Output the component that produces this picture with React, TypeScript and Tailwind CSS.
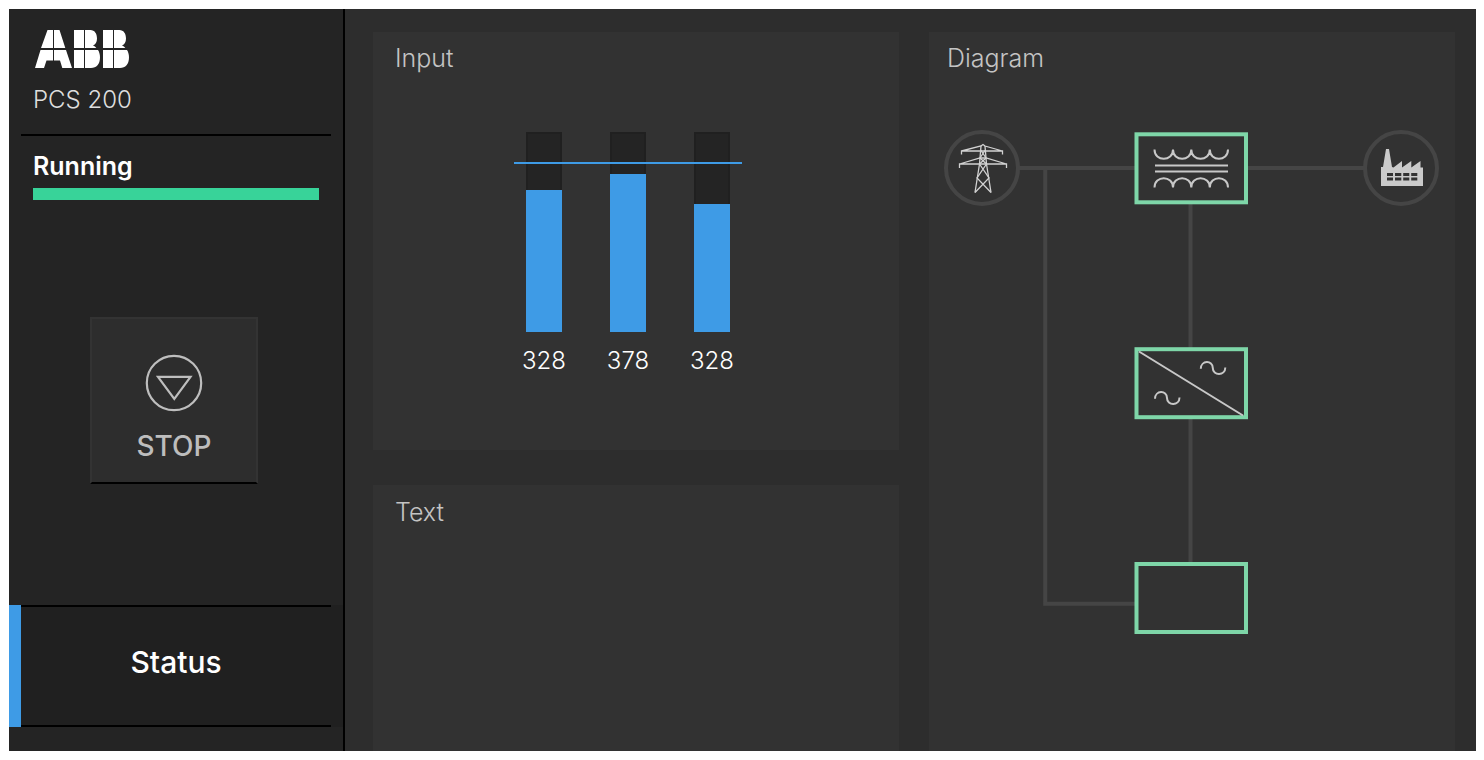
import React from "react";

type Phase = { id: string; value: number; level: number };

const phases: Phase[] = [
  { id: "L1", value: 328, level: 71 },
  { id: "L2", value: 378, level: 79 },
  { id: "L3", value: 328, level: 64 },
];

function Logo() {
  const rightHalf =
    "M50 0H55.5C59.5 0 62 3.5 62 8.5C62 12 60.5 14.5 58 15.6C59.5 16.2 60.5 17 61.3 18H50Z M50 20H63C64.3 22 65 24.5 65 27.5C65 34 61.5 38 56 38H50Z";
  const leftHalf = "M39 0H49V18H39Z M39 20H49V38H39Z";
  return (
    <svg role="img" aria-label="ABB" className="h-[38px] w-[94px]" viewBox="0 0 94 38" fill="#fff">
      <path d="M12.5 0H18V18H6Z M19 0H24.5L30.3 18H19Z" />
      <path d="M5.5 20H18V30.5H11.5L9 38H0Z M19 20H31L37 38H27.3L25 30.5H19Z" />
      <path d={leftHalf} />
      <path d={rightHalf} />
      <g transform="translate(29 0)">
        <path d={leftHalf} />
        <path d={rightHalf} />
      </g>
    </svg>
  );
}

function Sidebar() {
  return (
    <aside className="flex w-[336px] shrink-0 flex-col border-r-2 border-black bg-[#242424] pb-6">
      <header className="mx-3 border-b-2 border-black px-3 pt-[21px] pb-[18px]">
        <div className="pl-0.5">
          <Logo />
        </div>
        <p className="mt-4 text-2xl leading-8 font-light text-[#dedede]">PCS 200</p>
      </header>
      <section className="px-6 pt-4">
        <h2 className="text-[25px] leading-7 font-semibold text-white">Running</h2>
        <div className="mt-2 h-3 bg-[#38d399]" />
      </section>
      <div className="flex flex-1 items-center justify-center pr-1 pb-1">
        <button
          type="button"
          className="flex h-[167px] w-[168px] flex-col items-center border-2 border-[#333333] border-b-black bg-[#2d2d2d] pt-[35px] text-[28px] leading-8 font-medium text-[#bdbdbd]"
        >
          <svg className="mb-[18px] size-[58px]" viewBox="0 0 58 58" fill="none" stroke="#bebebe" strokeWidth="2.2" aria-hidden="true">
            <circle cx="29" cy="29" r="27.2" />
            <path d="M13 22.8H45.5L29.3 44.8Z" />
          </svg>
          STOP
        </button>
      </div>
      <nav>
        <a href="#status" className="flex h-[122px] bg-[#202020] pr-3 text-[30px] leading-8 font-medium text-white">
          <span className="w-3 bg-[#3e9be6]" />
          <span className="flex flex-1 items-center justify-center border-y-2 border-black pb-2">Status</span>
        </a>
      </nav>
    </aside>
  );
}

function PanelTitle({ children }: { children: React.ReactNode }) {
  return <h2 className="text-[25px] leading-8 font-light text-[#c4c4c4]">{children}</h2>;
}

function InputPanel() {
  return (
    <section className="h-[418px] bg-[#323232] px-[22px] pt-[10px]">
      <PanelTitle>Input</PanelTitle>
      <div className="mt-[58px] flex justify-center pr-4">
        <div className="relative flex w-[228px] justify-between px-3">
          {phases.map((phase) => (
            <div key={phase.id} className="flex w-9 flex-col items-center">
              <div className="flex h-[200px] w-9 flex-col justify-end bg-[#242424] shadow-[inset_0_0_0_2px_#202020]">
                <div className="bg-[#3e9be6]" style={{ height: `${phase.level}%` }} />
              </div>
              <span className="mt-[13px] text-2xl leading-8 font-light text-white">{phase.value}</span>
            </div>
          ))}
          <div className="absolute inset-x-0 top-[30px] h-0.5 bg-[#3e9be6]" />
        </div>
      </div>
    </section>
  );
}

function Diagram() {
  return (
    <svg className="mx-auto mt-14 h-[506px] w-[496px] max-w-full" viewBox="0 0 496 506" fill="none" role="img" aria-label="Power flow diagram">
      <g stroke="#454545" strokeWidth="4">
        <circle cx="38" cy="38" r="36" />
        <circle cx="457" cy="38" r="36" />
        <path d="M75 38H191 M303 38H420 M246.5 74V218 M246.5 288V432 M101.2 38V473.7H191" />
      </g>

      <g stroke="#7ed6a8" strokeWidth="4">
        <rect x="192.5" y="4.3" width="109.5" height="68" />
        <rect x="192.5" y="219.2" width="109.5" height="68" />
        <rect x="192.5" y="434" width="109.5" height="68" />
      </g>

      <g stroke="#d2d2d2" strokeWidth="1.3">
        <path d="M17.5 24.5V21H58.5V24.5 M17.5 21L37 16L39 14.5L41 16L58.5 21" />
        <path d="M15.5 38V34H62.5V38 M15.5 34L36 28H42L62.5 34" />
        <path d="M37 16L35.5 34L31 62.5 M41 16L42.5 34L47 62.5" />
        <path d="M36.7 20L42 28 M41.3 20L36 28 M36 28L42.5 34 M42 28L35.5 34" />
        <path d="M35.5 34L45 48L31 62.5 M42.5 34L33 48L47 62.5" />
      </g>

      <g stroke="#c8c8c8" strokeWidth="2">
        <path d="M210.5 19.5C210.5 31.9 229 31.9 229 19.5C229 31.9 247.3 31.9 247.3 19.5C247.3 31.9 265.8 31.9 265.8 19.5C265.8 31.9 284 31.9 284 19.5" />
        <path d="M210.5 57.5C210.5 45.1 229 45.1 229 57.5C229 45.1 247.3 45.1 247.3 57.5C247.3 45.1 265.8 45.1 265.8 57.5C265.8 45.1 284 45.1 284 57.5" />
        <path d="M211 35.5H284 M211 41.5H284" />
        <path d="M195 221.5L299 285.5" />
        <path d="M211 268.8C211 260 223 260 223 268C223 276 235.5 276 235.5 267.5" />
        <path d="M256.8 238.8C256.8 230 268.8 230 268.8 238C268.8 246 281.3 246 281.3 237.5" />
      </g>

      <path
        fill="#cacaca"
        fillRule="evenodd"
        d="M437 56V37H439L442 19H445L448 37L449.5 37.5L458 31V37.5L467.3 31V37.5L476.5 31V37.5H479V56Z M443 43V46H449V43Z M451 43V46H457.3V43Z M459.2 43V46H465.3V43Z M467.2 43V46H473.3V43Z M443 47.5V50.5H449V47.5Z M451 47.5V50.5H457.3V47.5Z M459.2 47.5V50.5H465.3V47.5Z M467.2 47.5V50.5H473.3V47.5Z"
      />
    </svg>
  );
}

export default function App() {
  return (
    <div className="flex min-h-screen bg-white py-[9px] pr-2 pl-[9px] font-['Inter','Liberation_Sans',sans-serif]">
      <Sidebar />
      <main className="grid flex-1 grid-cols-2 gap-[30px] bg-[#2d2d2d] pt-[23px] pr-[21px] pl-7">
        <div className="flex flex-col gap-[35px]">
          <InputPanel />
          <section className="flex-1 bg-[#323232] px-[22px] pt-[11px]">
            <PanelTitle>Text</PanelTitle>
          </section>
        </div>
        <section className="bg-[#323232] pt-[10px]">
          <div className="px-[18px]">
            <PanelTitle>Diagram</PanelTitle>
          </div>
          <Diagram />
        </section>
      </main>
    </div>
  );
}
